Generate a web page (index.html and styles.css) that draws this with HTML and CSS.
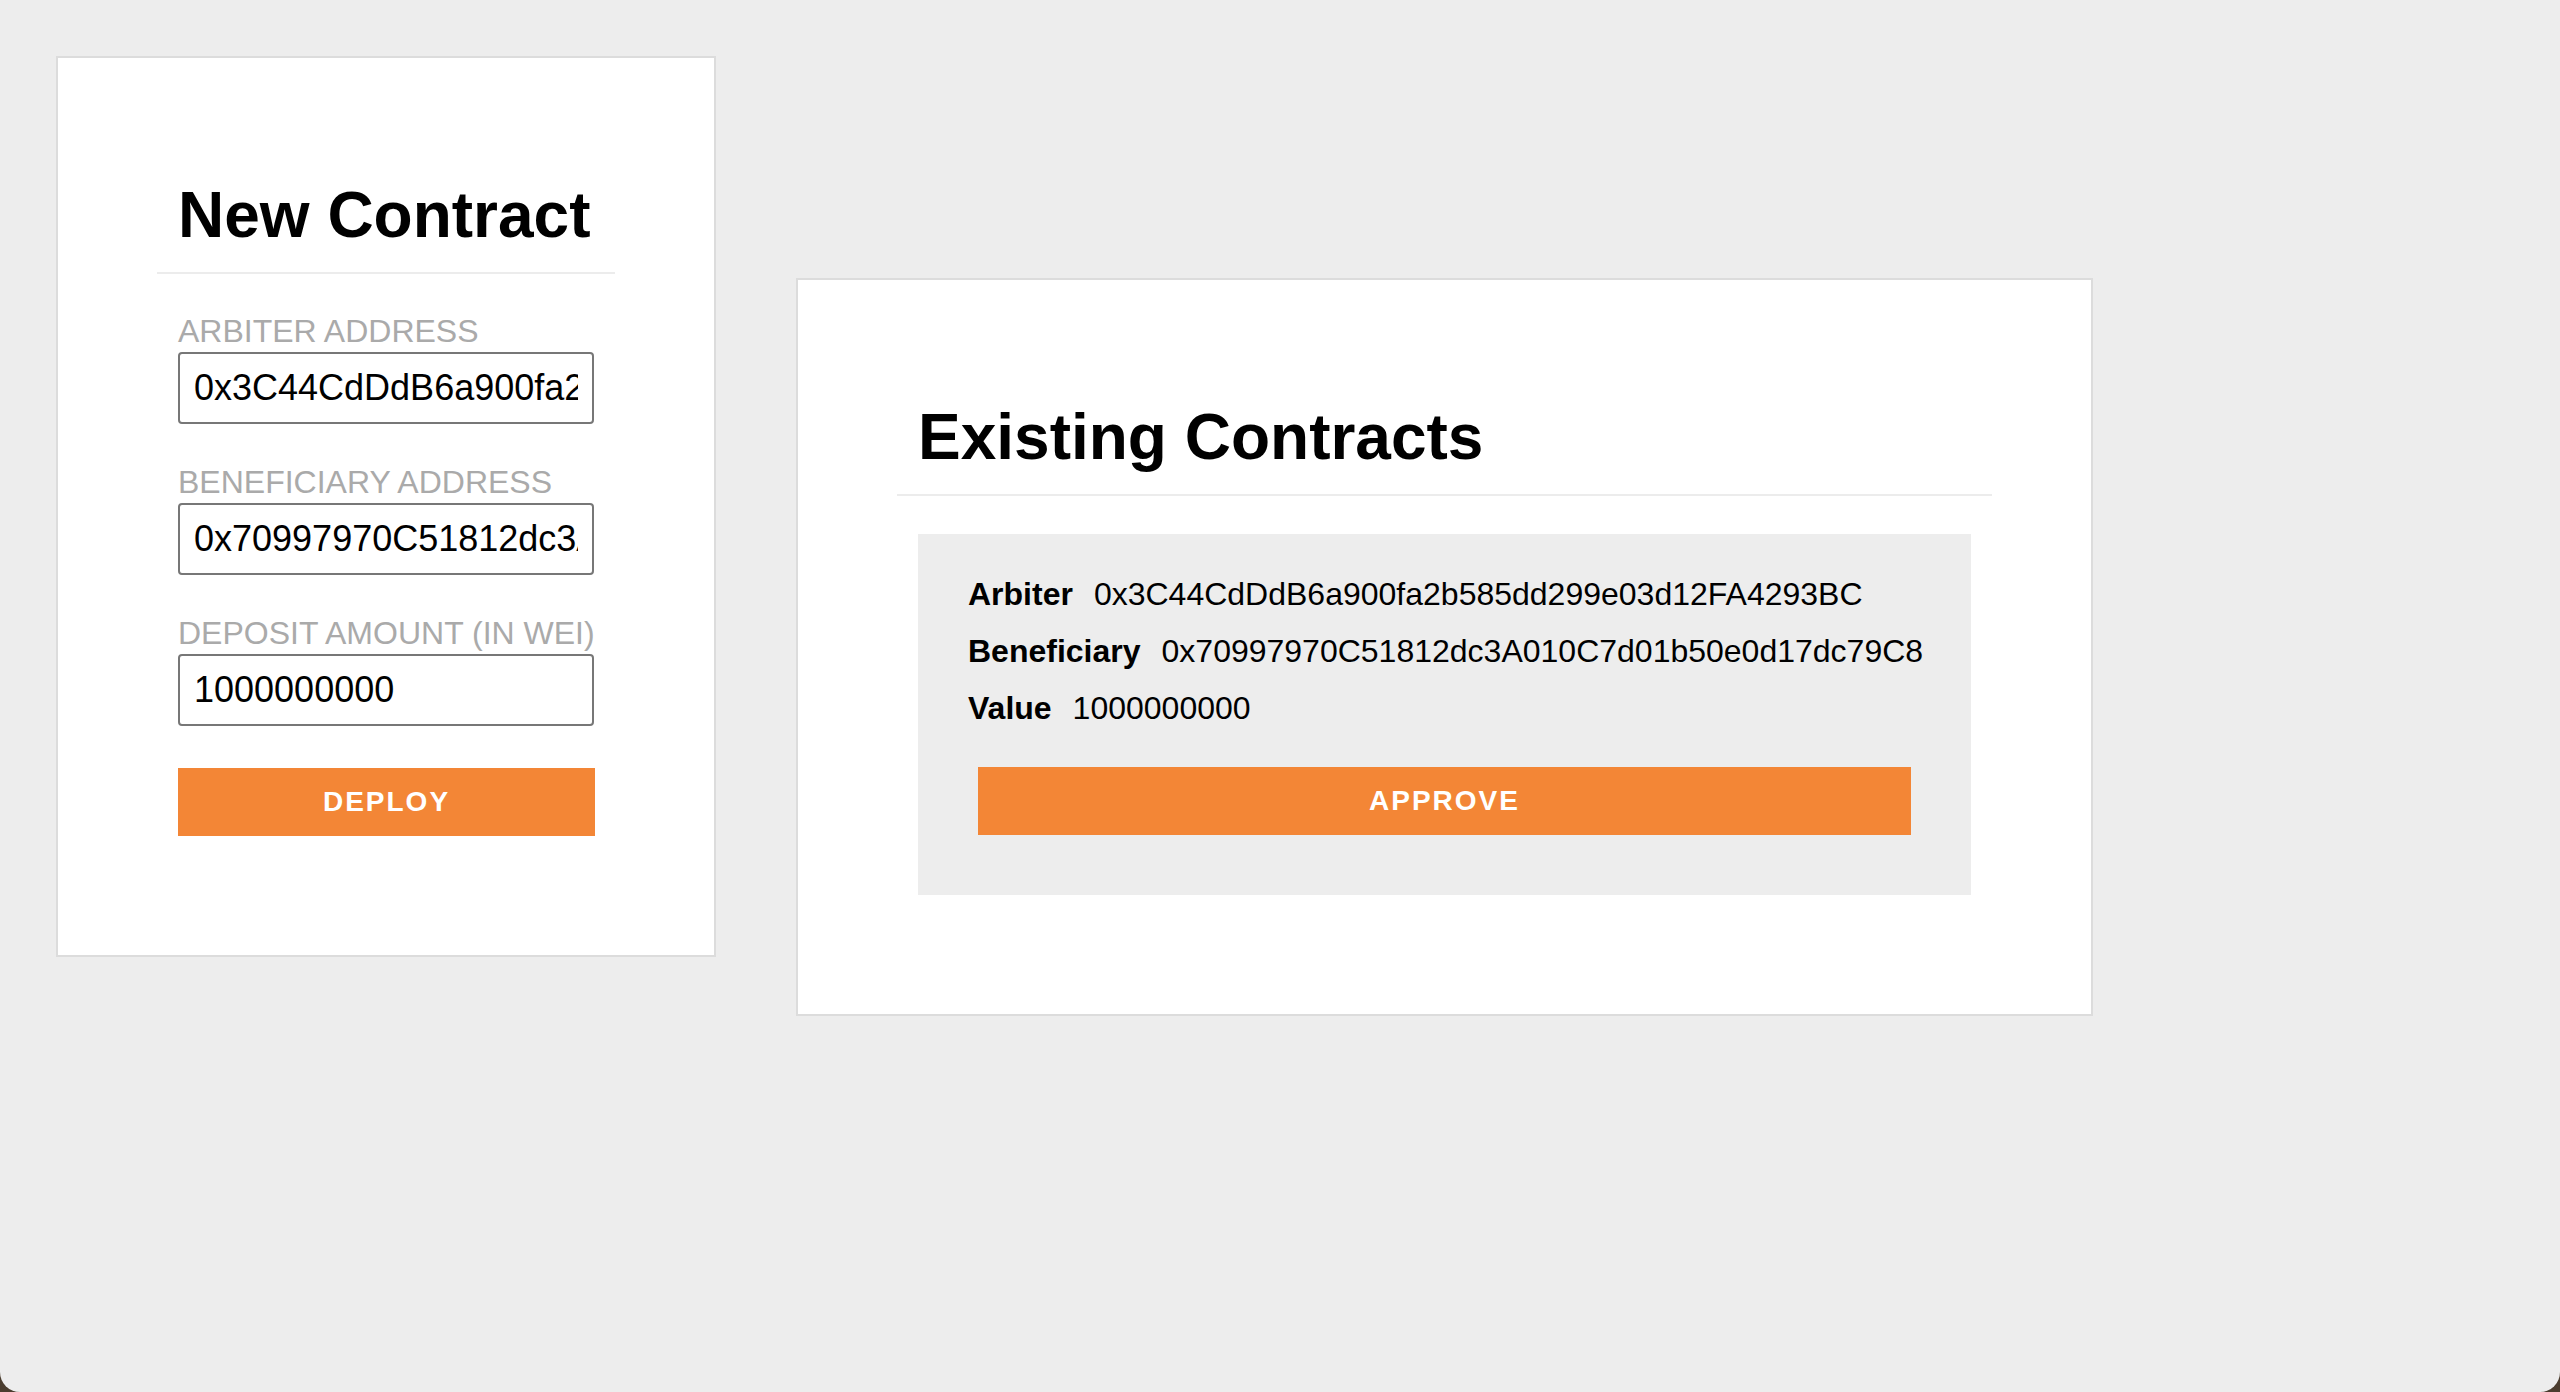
FILE: index.html
```html
<!DOCTYPE html>
<html lang="en">
<head>
<meta charset="utf-8">
<title>Escrow</title>
<link rel="stylesheet" href="styles.css">
</head>
<body>
<main class="page">
  <section class="card card-new">
    <h1 class="title">New Contract</h1>
    <hr class="divider">
    <label class="field">
      <span class="field-label">ARBITER ADDRESS</span>
      <input class="field-input" type="text" value="0x3C44CdDdB6a900fa2b585dd299e03d12FA4293BC">
    </label>
    <label class="field">
      <span class="field-label">BENEFICIARY ADDRESS</span>
      <input class="field-input" type="text" value="0x70997970C51812dc3A010C7d01b50e0d17dc79C8">
    </label>
    <label class="field">
      <span class="field-label">DEPOSIT AMOUNT (IN WEI)</span>
      <input class="field-input" type="text" value="1000000000">
    </label>
    <button class="btn" type="button">Deploy</button>
  </section>

  <section class="card card-existing">
    <h1 class="title">Existing Contracts</h1>
    <hr class="divider">
    <div class="contract">
      <ul class="contract-fields">
        <li class="contract-row"><span class="contract-key">Arbiter</span><span class="contract-val">0x3C44CdDdB6a900fa2b585dd299e03d12FA4293BC</span></li>
        <li class="contract-row"><span class="contract-key">Beneficiary</span><span class="contract-val">0x70997970C51812dc3A010C7d01b50e0d17dc79C8</span></li>
        <li class="contract-row"><span class="contract-key">Value</span><span class="contract-val">1000000000</span></li>
      </ul>
      <button class="btn btn-approve" type="button">Approve</button>
    </div>
  </section>
</main>
</body>
</html>
```
FILE: styles.css
```css
html {
  background: #4b3d2f;
  height: 100%;
}

body {
  margin: 0;
  min-height: 1392px;
  box-sizing: border-box;
  background: #ededed;
  border-radius: 0 0 20px 20px;
  font-family: "Liberation Sans", Arial, Helvetica, sans-serif;
  color: #000;
}

.page {
  display: flex;
  align-items: flex-start;
  gap: 80px;
  padding: 56px;
}

.card {
  background: #fff;
  border: 2px solid #dcdcdc;
  padding: 120px 120px 119px;
  display: flex;
  flex-direction: column;
}

.card-new {
  width: 416px;
  padding-bottom: 119px;
}

.card-existing {
  width: 1053px;
  margin-top: 222px;
}

.title {
  margin: 0;
  font-size: 64px;
  line-height: 74px;
  font-weight: 700;
}

.divider {
  border: 0;
  height: 2px;
  background: #ececec;
  margin: 20px -21px 38px;
}

.field {
  display: flex;
  flex-direction: column;
  margin-bottom: 39px;
}

.field:nth-of-type(3) {
  margin-bottom: 42px;
}

.field-label {
  display: block;
  font-size: 32px;
  line-height: 38px;
  color: #aaaaaa;
  margin-bottom: 2px;
  white-space: nowrap;
}

.field-input {
  box-sizing: border-box;
  width: 416px;
  height: 72px;
  margin: 0;
  padding: 0 14px;
  border: 2px solid #777;
  border-radius: 4px;
  font-family: "Liberation Sans", Arial, Helvetica, sans-serif;
  font-size: 36px;
  color: #000;
  background: #fff;
}

.btn {
  display: block;
  height: 68px;
  border: 0;
  margin: 0;
  padding: 0;
  background: #f38636;
  color: #fff;
  font-family: "Liberation Sans", Arial, Helvetica, sans-serif;
  font-size: 28px;
  font-weight: 700;
  letter-spacing: 2px;
  text-transform: uppercase;
  cursor: pointer;
}

.card-new .btn {
  width: 417px;
}

.contract {
  background: #ededed;
  padding: 42px 50px 60px;
}

.contract-fields {
  list-style: none;
  margin: 0;
  padding: 0;
}

.contract-row {
  display: flex;
  gap: 21px;
  font-size: 32px;
  line-height: 37px;
  margin-bottom: 20px;
  white-space: nowrap;
}

.contract-row:last-child {
  margin-bottom: 0;
}

.contract-key {
  font-weight: 700;
}

.btn-approve {
  margin: 40px 10px 0;
  width: calc(100% - 20px);
}
```
